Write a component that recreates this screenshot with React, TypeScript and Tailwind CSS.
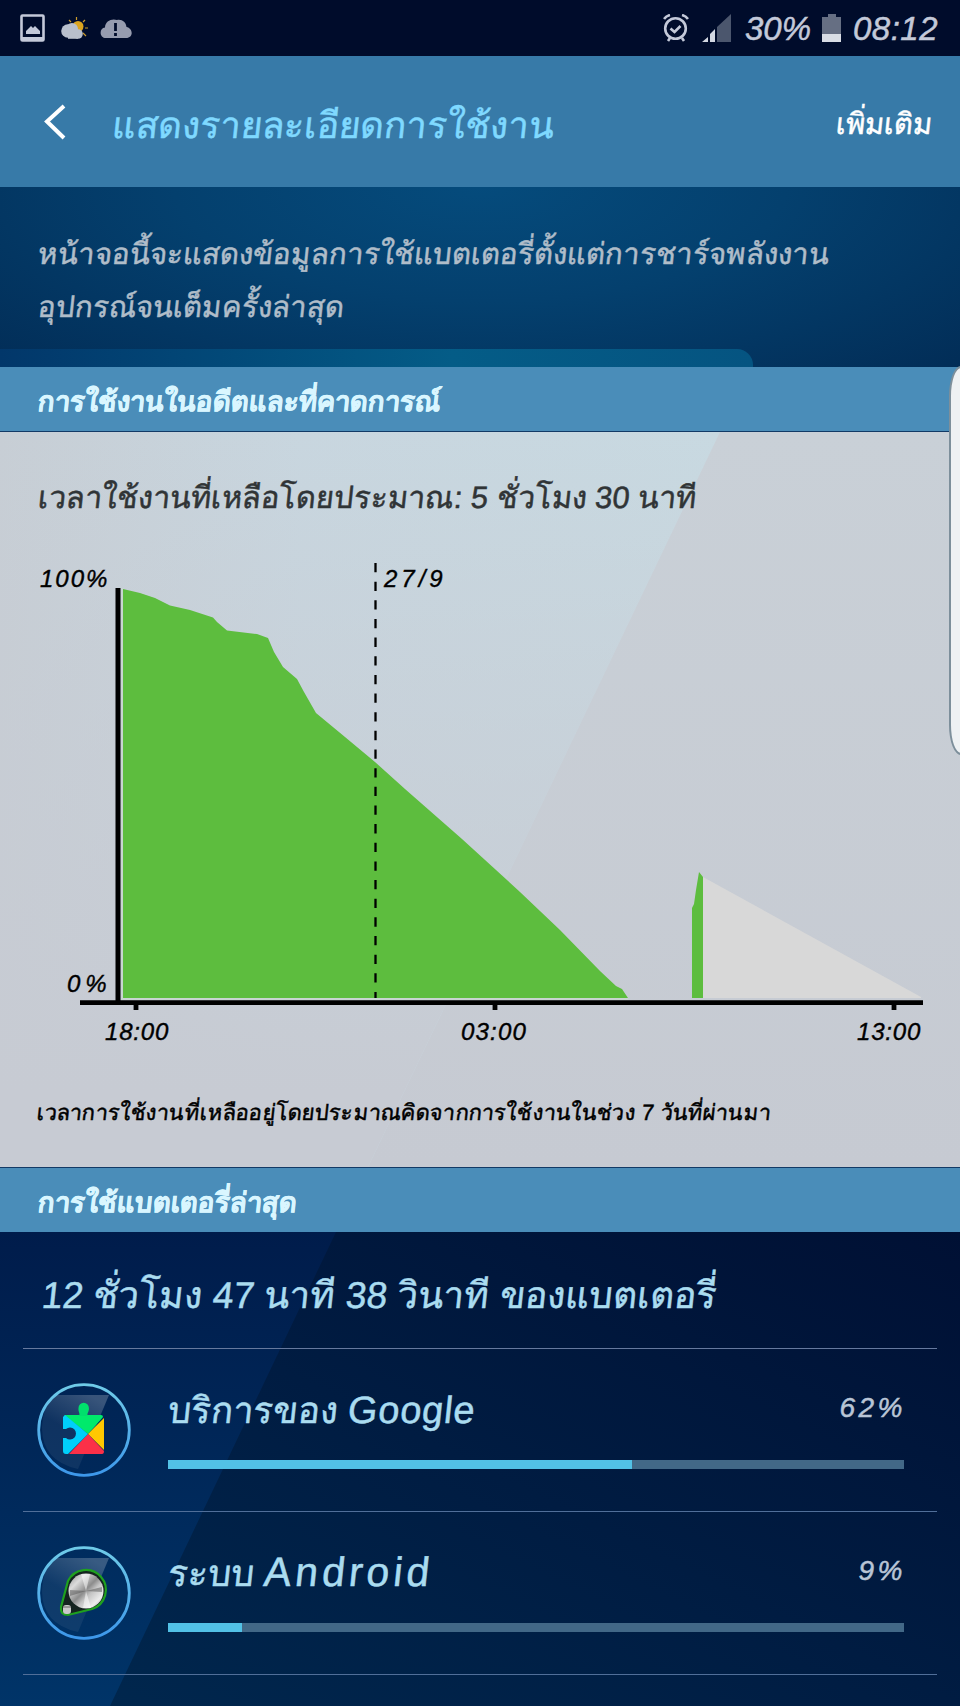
import type { ReactNode } from 'react';

interface AppUsage {
  name: string;
  latinName: string;
  latinClass: string;
  percent: number;
  icon: ReactNode;
}

// charge level over time, in chart pixels
const HISTORY =
  '123,589 140,593 155,598 170,605.5 190,610 213,617.5 217,622 227,630.5 257,634 268,638 274,652 283,667 297,679 304,692 316,713 345,737 375,762 405,789 462,839 520,892 560,930 600,971 616,986 622,989 628,998 123,998';
const CHARGE = '692,908 694,904 696,890 699,872 703,877 703,998 692,998';

function PhotoIcon() {
  return (
    <svg className="ml-5 h-7 w-[25px]" viewBox="0 0 25 28">
      <rect x="1.5" y="1.5" width="22" height="25" rx="1" fill="none" stroke="#c3c9d9" strokeWidth="2.6" />
      <path d="M1 23h23v4H1zM6 20v-3l5-5 2 2 2-2 5 5v3z" fill="#c3c9d9" />
    </svg>
  );
}

function WeatherIcon() {
  return (
    <svg className="ml-4 h-[23px] w-[27px]" viewBox="0 0 27 23">
      <path d="M15.5 0v3M8 3l2 2M24 3l-2 2M24 11h3M22 16l3 3" stroke="#c99b2c" strokeWidth="1.2" />
      <circle cx="17" cy="9.5" r="5.500" fill="#dca51f" />
      <circle cx="7" cy="14" r="6.800" fill="#b9c0cc" />
      <circle cx="11" cy="12" r="6" fill="#b9c0cc" />
      <circle cx="17" cy="17" r="4.800" fill="#b9c0cc" />
      <path d="M7 14h10v7.800H7z" fill="#b9c0cc" />
    </svg>
  );
}

function CloudAlertIcon() {
  return (
    <svg className="ml-3 h-[19px] w-8" viewBox="0 0 32 19">
      <path d="M6 19C-1 19-1 9 5 8.500 5 2 12-1 17 1c5-1 9 2 9.500 7C33 9 34 19 26 19z" fill="#969caf" />
      <path d="M15.500 4v8M15.500 14v3" stroke="#000c2b" strokeWidth="2.800" />
    </svg>
  );
}

function AlarmIcon() {
  return (
    <svg className="h-7 w-[26px]" viewBox="0 0 26 28" fill="none" stroke="#c3c9d9" strokeWidth="2.600">
      <circle cx="12.500" cy="14.500" r="10.300" />
      <path d="M7.500 14.500l4 3.500 6-6M1 5q2-3 6-4M25 5q-2-3-6-4M5 27l2-3M21 27l-2-3" />
    </svg>
  );
}

function SignalIcon() {
  return (
    <svg className="ml-[13px] h-7 w-[29px]" viewBox="0 0 29 28">
      <path d="M0 28l6-5v5zM8 20l5-5v13H8z" fill="#d3d8e2" />
      <path d="M15 13L29 0v28H15z" fill="#4b566d" />
    </svg>
  );
}

function BatteryIcon() {
  return (
    <svg className="absolute left-[822px] top-3.5 h-7 w-5" viewBox="0 0 20 28">
      <path d="M6 0h8v3h5v17H0V3h6z" fill="#666f83" />
      <path d="M0 20h19v8H0z" fill="#d9dde5" />
    </svg>
  );
}

function PlayServicesIcon() {
  return (
    <svg className="h-[94px] w-[94px]" viewBox="0 0 94 94">
      <defs>
        <linearGradient id="ring" x2="0" y2="1">
          <stop offset="0" stopColor="#6fcbe8" />
          <stop offset="1" stopColor="#3d97ea" />
        </linearGradient>
        <linearGradient id="shine" x1=".2" y1="1" x2=".7" y2="0">
          <stop offset="0" stopColor="#fff" stopOpacity=".06" />
          <stop offset=".5" stopColor="#fff" stopOpacity=".06" />
          <stop offset="1" stopColor="#fff" stopOpacity=".22" />
        </linearGradient>
      </defs>
      <path d="M17 12h55L41 86Q5 78 5 45 6 22 17 12" fill="url(#shine)" />
      <circle cx="47" cy="47" r="45.300" fill="none" stroke="url(#ring)" strokeWidth="2.800" />
      <path d="M27 32h37q2 0 2 2L51 51z" fill="#00ea6b" />
      <path d="M42 33c1.500-3-1-4-.5-8a5.200 5.200 0 0 1 10.400 0c.5 4-2.500 5-1 8z" fill="#00e06c" />
      <path d="M67 35v32L51 51z" fill="#ffc800" />
      <path d="M51 51l16 17q0 3-2 3H32z" fill="#fb3048" />
      <path d="M28 32l23 19-20 20h-2q-3 0-3-3V55h3a6 6 0 1 0 0-9h-3V34z" fill="#00cffb" />
    </svg>
  );
}

function AndroidSystemIcon() {
  return (
    <svg className="h-[94px] w-[94px]" viewBox="0 0 94 94">
      <defs>
        <linearGradient id="steel" x2="1" y2="1">
          <stop offset="0" stopColor="#8a8a8a" />
          <stop offset=".25" stopColor="#dcdcdc" />
          <stop offset=".48" stopColor="#8c8c8c" />
          <stop offset=".6" stopColor="#c4c4c4" />
          <stop offset=".8" stopColor="#ececec" />
          <stop offset="1" stopColor="#999" />
        </linearGradient>
      </defs>
      <path d="M17 12h55L41 86Q5 78 5 45 6 22 17 12" fill="url(#shine)" />
      <circle cx="47" cy="47" r="45.300" fill="none" stroke="url(#ring)" strokeWidth="2.800" />
      <path d="M24 61l7-26a20 20 0 1 1 24 28l-24 6q-8 0-7-8z" fill="#14231f" stroke="#1fa01f" strokeWidth="2.200" />
      <circle cx="49" cy="45" r="17.500" fill="url(#steel)" />
      <path d="M49 45l-16 5v-6zM49 45l16-4v5z" fill="#555" opacity=".5" />
      <path d="M49 45l-5-17h9zM49 45l-3 17h8z" fill="#fff" opacity=".5" />
      <rect x="26" y="59" width="8" height="9" rx="3" fill="#c9c9c9" />
      <path d="M26 61h8" stroke="#666" />
    </svg>
  );
}

const apps: AppUsage[] = [
  { name: 'บริการของ', latinName: 'Google', latinClass: 'text-[38px] tracking-[.8px]', percent: 62, icon: <PlayServicesIcon /> },
  { name: 'ระบบ', latinName: 'Android', latinClass: 'text-[41px] tracking-[4px]', percent: 9, icon: <AndroidSystemIcon /> },
];

function StatusBar() {
  return (
    <div className="relative flex h-14 items-center bg-[#000c2b] text-[#c3c9d9]">
      <PhotoIcon />
      <WeatherIcon />
      <CloudAlertIcon />
      <div className="ml-auto flex items-center">
        <AlarmIcon />
        <SignalIcon />
        <span className="ml-3.5 w-[108px] pt-0.5 text-[33px] italic">30%</span>
        <BatteryIcon />
        <span className="mr-5 w-[87px] pt-0.5 text-[33px] italic tracking-[.5px]">08:12</span>
      </div>
    </div>
  );
}

function SectionTitle({ children }: { children: ReactNode }) {
  return (
    <h2 className="flex h-16 items-center bg-[#4a8db9] pl-[38px] pt-[5px] text-[27.6px] font-bold text-[#d9f6ff]">
      <span className="-skew-x-6">{children}</span>
    </h2>
  );
}

function UsageChart() {
  return (
    <svg className="block h-[520px] w-[960px]" viewBox="0 550 960 520">
      <polygon points={HISTORY} fill="#5dbd3e" />
      <polygon points={CHARGE} fill="#5dbd3e" />
      <polygon points="703,877 921,997 921,998 703,998" fill="#d8d8d8" />
      <path d="M118 588V1001" stroke="#000" strokeWidth="5" />
      <path d="M122 588V999H628" stroke="#c9d8cf" strokeWidth="1.500" fill="none" />
      <path d="M80 1002.700H923M136 1005v5M495 1005v5M894 1005v5" stroke="#000" strokeWidth="4.800" />
      <path d="M375.500 563V998" stroke="#000" strokeWidth="2.300" strokeDasharray="9.300 9.350" />
      <g className="text-[24px] italic" fill="#000" stroke="#000" strokeWidth=".4">
        <text x="40" y="587" className="tracking-[2px]">100%</text>
        <text x="67" y="992" className="tracking-[5px]">0%</text>
        <text x="384" y="587" className="tracking-[4px]">27/9</text>
        <text x="105" y="1040" className="tracking-[.8px]">18:00</text>
        <text x="461" y="1040" className="tracking-[1.2px]">03:00</text>
        <text x="857" y="1040" className="tracking-[.8px]">13:00</text>
      </g>
    </svg>
  );
}

function UsageRow({ name, latinName, latinClass, percent, icon }: AppUsage) {
  return (
    <li className="mx-[23px] flex h-[163px] border-b border-[#516f99] pl-3.5 pt-[34px]">
      {icon}
      <div className="ml-[37px] w-[736px]">
        <div className="flex h-[77px] items-center justify-between pb-[23px]">
          <span className="-skew-x-6 whitespace-pre text-[36.5px] text-[#aadcf0]">
            {name} <span className={latinClass}>{latinName}</span>
          </span>
          <span className="-mr-0.5 pb-1 text-[28px] italic tracking-[3.5px] text-[#b9c5d6]">{percent}%</span>
        </div>
        <div className="h-[9px] bg-[#426887]">
          <div className="h-full bg-[#52c1e6]" style={{ width: `${percent + 1}%` }} />
        </div>
      </div>
    </li>
  );
}

export default function App() {
  return (
    <div className="relative h-[1706px] w-[960px] overflow-hidden bg-[#001a3f] font-['Liberation_Sans','Noto_Sans',sans-serif] [-webkit-text-stroke:0.5px_currentColor]">
      <StatusBar />

      <header className="flex h-[131px] items-center bg-[#377aa8]">
        <svg className="ml-11 h-9 w-[22px]" viewBox="0 0 22 36">
          <path d="M20 2L3 17.500 20 34" fill="none" stroke="#fff" strokeWidth="4" />
        </svg>
        <h1 className="ml-[47px] -skew-x-6 pt-2 text-[36.7px] text-[#7fd9ff]">แสดงรายละเอียดการใช้งาน</h1>
        <span className="ml-auto mr-7 -skew-x-6 pt-1 text-[29.3px] text-white">เพิ่มเติม</span>
      </header>

      <section className="relative h-[180px] bg-[radial-gradient(ellipse_at_50%_0%,#054b7c_0%,#04406e_45%,#022d57_100%)] pl-[38px] pt-[40px]">
        <div className="absolute bottom-0 left-0 h-[18px] w-[753px] rounded-tr-2xl bg-linear-to-r from-[#02376a] via-[#045c87] via-60% to-[#055481]" />
        <p className="text-[29.6px] leading-[53px] text-[#b0bdc9]">
          <span className="block -skew-x-6">หน้าจอนี้จะแสดงข้อมูลการใช้แบตเตอรี่ตั้งแต่การชาร์จพลังงาน</span>
          <span className="block -skew-x-6">อุปกรณ์จนเต็มครั้งล่าสุด</span>
        </p>
      </section>

      <SectionTitle>การใช้งานในอดีตและที่คาดการณ์</SectionTitle>

      <section className="relative h-[737px] border-y border-[#123a66] bg-linear-to-b from-[#c9d0d7] to-[#c6cad2]">
        <div className="absolute inset-0 bg-[linear-gradient(to_bottom,transparent,#c7cbd3_90%),linear-gradient(to_right,#c7ced5,#c8d6df_300px,#c8d9e1_720px)] [clip-path:polygon(0_0,720px_0,368px_100%,0_100%)]" />
        <div className="relative">
          <p className="flex h-[118px] items-center pl-[38px] pt-[14px] text-[30.8px] text-[#303436]">
            <span className="-skew-x-6">เวลาใช้งานที่เหลือโดยประมาณ: 5 ชั่วโมง 30 นาที</span>
          </p>
          <UsageChart />
          <p className="-skew-x-6 pl-[38px] pt-[26px] text-[22px] tracking-[.15px] text-black">
            เวลาการใช้งานที่เหลืออยู่โดยประมาณคิดจากการใช้งานในช่วง 7 วันที่ผ่านมา
          </p>
        </div>
      </section>

      <SectionTitle>การใช้แบตเตอรี่ล่าสุด</SectionTitle>

      <section className="relative h-[474px] bg-linear-to-bl from-[#001034] via-[#001c42] to-[#00284f]">
        <div className="absolute inset-0 bg-linear-to-b from-[#001c4b] to-[#003468] [clip-path:polygon(0_0,336px_0,110px_100%,0_100%)]" />
        <div className="relative">
          <h3 className="mx-[23px] flex h-[117px] items-center border-b border-[#66799e] pl-[19px] pt-[11px] text-[37.2px] text-[#aadcf0]">
            <span className="-skew-x-6">12 ชั่วโมง 47 นาที 38 วินาที ของแบตเตอรี่</span>
          </h3>
          <ul>
            {apps.map((app) => (
              <UsageRow key={app.latinName} {...app} />
            ))}
          </ul>
        </div>
      </section>

      {/* edge panel handle */}
      <div className="absolute left-[949px] top-[366px] h-[389px] w-6 rounded-[24px/60px] border-2 border-[#7d8f9b] bg-[#eef1f3]" />
    </div>
  );
}
